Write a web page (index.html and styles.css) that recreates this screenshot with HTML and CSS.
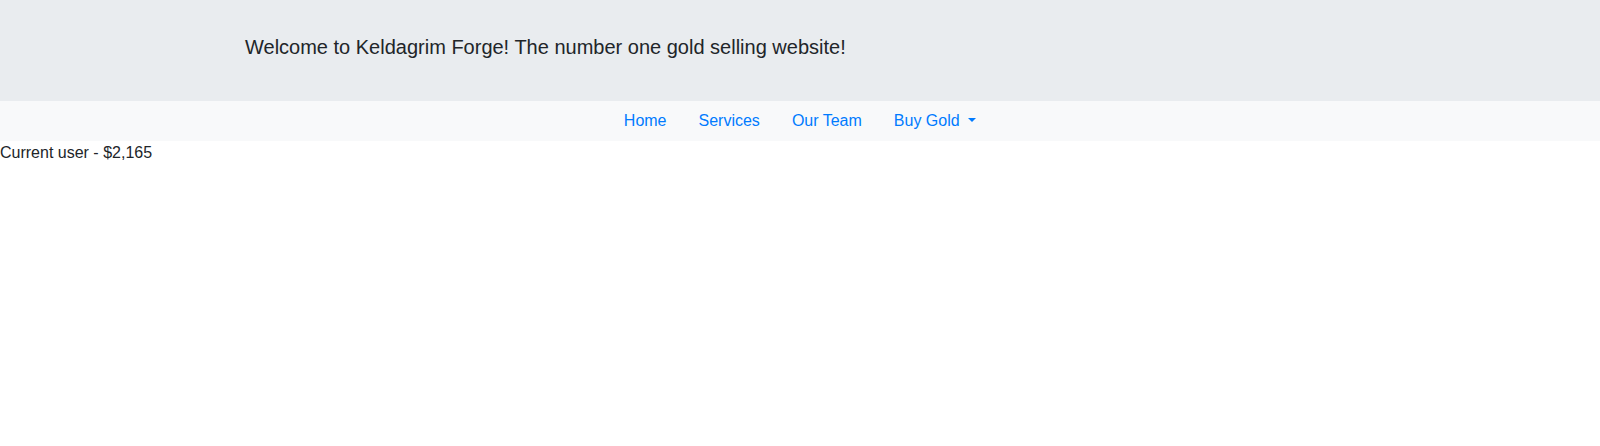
FILE: index.html
```html
<!DOCTYPE html>
<html lang="en">
<head>
<meta charset="utf-8">
<title>Keldagrim Forge</title>
<link rel="stylesheet" href="styles.css">
</head>
<body>
<header class="jumbotron">
  <div class="container">
    <p class="lead">Welcome to Keldagrim Forge! The number one gold selling website!</p>
  </div>
</header>
<nav class="nav-bar">
  <a class="nav-link" href="#">Home</a>
  <a class="nav-link" href="#">Services</a>
  <a class="nav-link" href="#">Our Team</a>
  <a class="nav-link dropdown-toggle" href="#">Buy Gold <span class="caret"></span></a>
</nav>
<div class="user">Current user - $2,165</div>
</body>
</html>
```

FILE: styles.css
```css
* { box-sizing: border-box; }
html, body { margin: 0; padding: 0; }
body {
  font-family: "Liberation Sans", Arial, sans-serif;
  font-size: 16px;
  line-height: 1.5;
  color: #212529;
  background: #fff;
}
.jumbotron {
  background: #e9ecef;
  padding: 32px 0 39px;
}
.container {
  max-width: 1140px;
  margin: 0 auto;
  padding: 0 15px;
}
.lead {
  margin: 0;
  font-size: 20px;
  line-height: 30px;
  font-weight: 300;
}
.nav-bar {
  background: #f8f9fa;
  display: flex;
  justify-content: center;
}
.nav-link {
  display: block;
  padding: 8px 16px;
  color: #007bff;
  text-decoration: none;
  line-height: 24px;
}
.caret {
  display: inline-block;
  margin-left: 0.255em;
  vertical-align: 0.255em;
  border-top: 0.3em solid;
  border-right: 0.3em solid transparent;
  border-left: 0.3em solid transparent;
  border-bottom: 0;
}
.user {
  line-height: 24px;
}
```
